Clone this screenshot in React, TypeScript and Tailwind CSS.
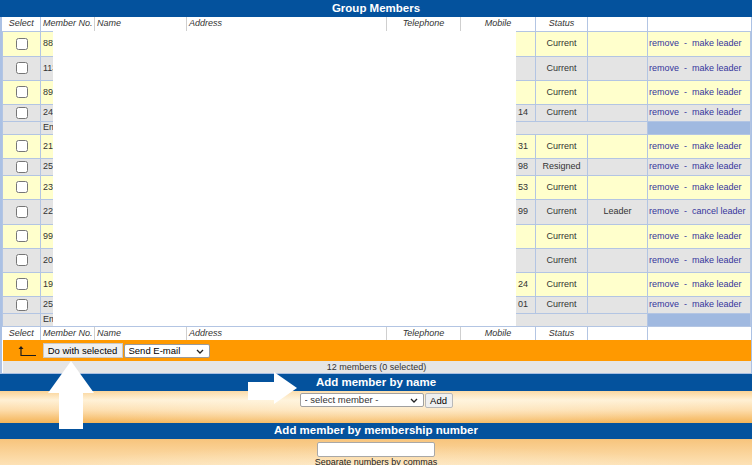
import type { ReactNode } from 'react';

type Member = {
	no: string;
	mobile: string;
	status: string;
	leader?: string;
	action: string;
	rowH: string;
};

type Row = { kind: 'member'; m: Member; yellow: boolean } | { kind: 'email'; rowH: string };

const members: Member[] = [
	{ no: '8812', mobile: '', status: 'Current', action: 'make leader', rowH: 'h-[25px]' },
	{ no: '1135', mobile: '', status: 'Current', action: 'make leader', rowH: 'h-[24px]' },
	{ no: '8934', mobile: '', status: 'Current', action: 'make leader', rowH: 'h-[24px]' },
	{ no: '2451', mobile: '07700 900 14', status: 'Current', action: 'make leader', rowH: 'h-[17px]' },
	{ no: '2107', mobile: '07700 901 31', status: 'Current', action: 'make leader', rowH: 'h-[24px]' },
	{ no: '2516', mobile: '07700 902 98', status: 'Resigned', action: 'make leader', rowH: 'h-[17px]' },
	{ no: '2340', mobile: '07700 903 53', status: 'Current', action: 'make leader', rowH: 'h-[24px]' },
	{ no: '2298', mobile: '07700 904 99', status: 'Current', leader: 'Leader', action: 'cancel leader', rowH: 'h-[25px]' },
	{ no: '9961', mobile: '', status: 'Current', action: 'make leader', rowH: 'h-[24px]' },
	{ no: '2073', mobile: '', status: 'Current', action: 'make leader', rowH: 'h-[24px]' },
	{ no: '1984', mobile: '07700 905 24', status: 'Current', action: 'make leader', rowH: 'h-[24px]' },
	{ no: '2529', mobile: '07700 906 01', status: 'Current', action: 'make leader', rowH: 'h-[17px]' },
];

const rows: Row[] = [
	...members.slice(0, 4).map((m, i) => ({ kind: 'member' as const, m, yellow: i % 2 === 0 })),
	{ kind: 'email', rowH: 'h-[13px]' },
	...members.slice(4).map((m, i) => ({ kind: 'member' as const, m, yellow: i % 2 === 0 })),
	{ kind: 'email', rowH: 'h-[13px]' },
];

const cell = 'border border-[#b3c5e3] p-0 align-middle';

function HeaderRow() {
	const th = 'p-0 h-[14px] font-normal italic text-[9px] leading-none text-[#333]';
	return (
		<tr className="h-[14px] bg-white">
			<th className={`${th} border-r border-[#b3c5e3] text-center text-[#4a4a9e]`}>Select</th>
			<th className={`${th} text-left pl-[2px]`}>Member No.</th>
			<th className={`${th} text-left pl-[2px] border-l border-[#cfcfcf]`}>Name</th>
			<th className={`${th} text-left pl-[2px] border-l border-[#cfcfcf]`}>Address</th>
			<th className={`${th} text-center border-l border-[#cfcfcf]`}>Telephone</th>
			<th className={`${th} text-center border-l border-[#cfcfcf]`}>Mobile</th>
			<th className={`${th} text-center border-l border-[#b3c5e3]`}>Status</th>
			<th className={`${th} border-l border-[#b3c5e3]`} />
			<th className={`${th} border-l border-[#b3c5e3]`} />
		</tr>
	);
}

function Section({ children }: { children: ReactNode }) {
	return (
		<div className="bg-[#04529d] text-center text-[11.5px] font-bold leading-none text-white">{children}</div>
	);
}

function Chevron() {
	return (
		<svg width="8" height="5" viewBox="0 0 8 5" className="pointer-events-none absolute right-[6px] top-[5px]">
			<path d="M1 1 L4 4 L7 1" fill="none" stroke="#222" strokeWidth="1.3" />
		</svg>
	);
}

export default function App() {
	return (
		<div className="relative h-[465px] w-[752px] overflow-hidden bg-white font-['Liberation_Sans',Arial,sans-serif] text-[#333]">
			<div className="flex h-[17px] items-center justify-center bg-[#04529d] text-[11.5px] font-bold text-white">
				Group Members
			</div>

			<div className="border-x-2 border-[#abc1e4]">
				<table className="w-[748px] table-fixed border-collapse text-[9px] leading-none">
					<colgroup>
						<col className="w-[38px]" />
						<col className="w-[54px]" />
						<col className="w-[92px]" />
						<col className="w-[200px]" />
						<col className="w-[74px]" />
						<col className="w-[75px]" />
						<col className="w-[52px]" />
						<col className="w-[60px]" />
						<col className="w-[103px]" />
					</colgroup>
					<tbody>
						<HeaderRow />
						{rows.map((r, i) =>
							r.kind === 'email' ? (
								<tr key={i} className={`${r.rowH} bg-[#e4e4e4]`}>
									<td className={cell} />
									<td className={`${cell} pl-[2px] whitespace-nowrap overflow-hidden`} colSpan={7}>
										Email: member list
									</td>
									<td className={`${cell} bg-[#a0b9e0]`} />
								</tr>
							) : (
								<tr key={i} className={`${r.m.rowH} ${r.yellow ? 'bg-[#ffffcc]' : 'bg-[#e4e4e4]'}`}>
									<td className={`${cell} text-center`}>
										<input type="checkbox" className="m-0 h-[12px] w-[12px] align-middle" />
									</td>
									<td className={`${cell} pl-[2px]`}>{r.m.no}</td>
									<td className={cell} />
									<td className={cell} />
									<td className={cell} />
									<td className={`${cell} text-right pr-[7px] whitespace-nowrap`}>{r.m.mobile}</td>
									<td className={`${cell} text-center`}>{r.m.status}</td>
									<td className={`${cell} text-center`}>{r.m.leader ?? ''}</td>
									<td className={`${cell} whitespace-nowrap pl-[1px] text-[#35359c]`}>
										remove<span className="mx-[5px]">-</span>
										{r.m.action}
									</td>
								</tr>
							)
						)}
						<HeaderRow />
						<tr className="h-[21px] bg-[#ff9900]">
							<td className="p-0 align-middle">
								<svg width="20" height="12" viewBox="0 0 20 12" className="ml-[14px] block">
									<path d="M4 2.5 V10.5 H19" fill="none" stroke="#1b1b1b" strokeWidth="1.2" />
									<path d="M1.5 4 L4 1 L6.5 4 Z" fill="#1b1b1b" />
								</svg>
							</td>
							<td className="p-0 align-middle" colSpan={8}>
								<div className="flex items-center gap-px pl-[2px]">
									<button
										type="button"
										className="block h-[15px] w-[80px] border border-[#c9c9c9] bg-[#efefef] text-[9.5px] leading-none text-black"
									>
										Do with selected
									</button>
									<div className="relative h-[14px] w-[86px]">
										<select className="block h-[14px] w-[86px] appearance-none rounded-[2px] border border-[#9a9a9a] bg-white pl-[4px] text-[9.5px] leading-none text-black">
											<option>Send E-mail</option>
										</select>
										<Chevron />
									</div>
								</div>
							</td>
						</tr>
						<tr className="h-[12px] bg-[#e5e5e5]">
							<td colSpan={9} className="h-[12px] p-0 text-center text-[9px] leading-none">
								12 members (0 selected)
							</td>
						</tr>
					</tbody>
				</table>
			</div>
			<div className="h-px bg-[#a9bfe2]" />

			<Section>
				<div className="flex h-[17px] items-center justify-center">Add member by name</div>
			</Section>
			<div className="flex h-[32px] items-start justify-center gap-px bg-[radial-gradient(ellipse_50%_80%_at_50%_40%,rgba(255,250,235,0.55),rgba(255,250,235,0)),linear-gradient(to_bottom,#fad295_0%,#fff0d4_28%,#fddcaa_60%,#f4b458_100%)] pt-[2px]">
				<div className="relative h-[14px] w-[124px]">
					<select className="block h-[14px] w-[124px] appearance-none rounded-[2px] border border-[#a0a0a0] bg-white pl-[4px] text-[9.5px] leading-none text-[#333]">
						<option>- select member -</option>
					</select>
					<Chevron />
				</div>
				<button
					type="button"
					className="block h-[15px] w-[28px] rounded-[2px] border border-[#b9b9b9] bg-[#efefef] text-[9.5px] leading-none text-black"
				>
					Add
				</button>
			</div>
			<Section>
				<div className="flex h-[16px] items-center justify-center">Add member by membership number</div>
			</Section>
			<div className="flex h-[60px] flex-col items-center bg-[radial-gradient(ellipse_50%_60%_at_50%_70%,rgba(255,250,235,0.5),rgba(255,250,235,0)),linear-gradient(to_bottom,#f7c47c_0%,#fcdcaa_35%,#feeacb_60%,#f5bc68_100%)] pt-[3px]">
				<input type="text" className="block h-[15px] w-[118px] rounded-[2px] border border-[#a8a8a8] bg-white" />
				<div className="mt-px text-[9px] leading-none text-[#222]">Separate numbers by commas</div>
			</div>

			<div className="absolute left-[53px] top-[31px] h-[295px] w-[463px] bg-white" />

			<svg className="absolute left-[48px] top-[361px]" width="46" height="68" viewBox="0 0 46 68">
				<polygon points="23,0 46,32 35,32 35,68 11,68 11,32 0,32" fill="#fff" />
			</svg>
			<svg className="absolute left-[248px] top-[372px]" width="49" height="32" viewBox="0 0 49 32">
				<polygon points="0,10 26,10 26,0 49,16 26,32 26,28 0,28" fill="#fff" />
			</svg>
		</div>
	);
}
